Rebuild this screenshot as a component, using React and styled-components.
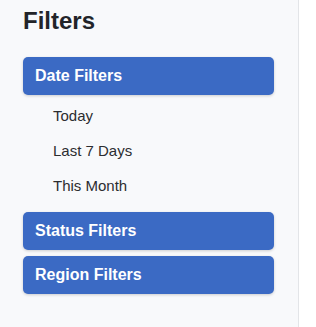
import React, { useState } from "react";
import styled, { createGlobalStyle } from "styled-components";

const GlobalStyle = createGlobalStyle`
  html, body {
    margin: 0;
    padding: 0;
    background: #ffffff;
    font-family: "Liberation Sans", Arial, sans-serif;
  }
`;

const Sidebar = styled.aside`
  box-sizing: border-box;
  width: 299px;
  min-height: 100vh;
  padding: 7px 24px 0 23px;
  background: #f8f9fb;
  border-right: 1px solid #e3e5e8;
`;

const Title = styled.h2`
  margin: 0 0 22px;
  font-size: 24px;
  line-height: 28px;
  font-weight: 700;
  color: #222429;
`;

const Section = styled.div`
  margin-bottom: 6px;
`;

const Header = styled.button`
  display: flex;
  align-items: center;
  width: 100%;
  height: 38px;
  padding: 0 12px;
  border: none;
  border-radius: 5px;
  background: #3b6ac4;
  box-shadow: 0 1px 3px rgba(0, 0, 0, 0.18);
  color: #ffffff;
  font-family: inherit;
  font-size: 16px;
  font-weight: 700;
  text-align: left;
  cursor: pointer;
`;

const List = styled.ul`
  list-style: none;
  margin: 0;
  padding: 3px 0 3px;
`;

const Item = styled.li`
  height: 35px;
  display: flex;
  align-items: center;
  padding-left: 30px;
  font-size: 15px;
  color: #2c2d30;
  cursor: pointer;
`;

const sections = [
  { title: "Date Filters", items: ["Today", "Last 7 Days", "This Month"] },
  { title: "Status Filters", items: ["Open", "Closed", "Pending"] },
  { title: "Region Filters", items: ["North", "South", "East", "West"] },
];

export default function App() {
  const [open, setOpen] = useState("Date Filters");

  return (
    <>
      <GlobalStyle />
      <Sidebar>
        <Title>Filters</Title>
        {sections.map((s) => (
          <Section key={s.title}>
            <Header onClick={() => setOpen(open === s.title ? null : s.title)}>
              {s.title}
            </Header>
            {open === s.title && (
              <List>
                {s.items.map((it) => (
                  <Item key={it}>{it}</Item>
                ))}
              </List>
            )}
          </Section>
        ))}
      </Sidebar>
    </>
  );
}
